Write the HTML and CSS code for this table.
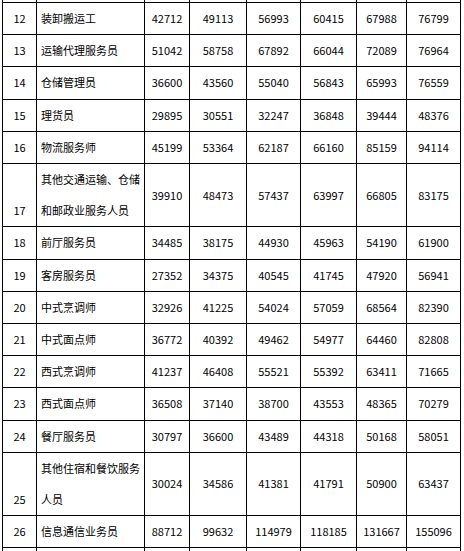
FILE: index.html
```html
<!DOCTYPE html>
<html lang="zh-CN">
<head>
<meta charset="utf-8">
<title>职业工资价位表</title>
<link rel="stylesheet" href="styles.css">
</head>
<body>
<div class="sheet">
  <div class="row stub"><div class="cell"></div><div class="cell"></div><div class="cell"></div><div class="cell"></div><div class="cell"></div><div class="cell"></div><div class="cell"></div><div class="cell"></div></div>
  <div class="row"><div class="cell no">12</div><div class="cell name">装卸搬运工</div><div class="cell num">42712</div><div class="cell num">49113</div><div class="cell num">56993</div><div class="cell num">60415</div><div class="cell num">67988</div><div class="cell num">76799</div></div>
  <div class="row"><div class="cell no">13</div><div class="cell name">运输代理服务员</div><div class="cell num">51042</div><div class="cell num">58758</div><div class="cell num">67892</div><div class="cell num">66044</div><div class="cell num">72089</div><div class="cell num">76964</div></div>
  <div class="row"><div class="cell no">14</div><div class="cell name">仓储管理员</div><div class="cell num">36600</div><div class="cell num">43560</div><div class="cell num">55040</div><div class="cell num">56843</div><div class="cell num">65993</div><div class="cell num">76559</div></div>
  <div class="row"><div class="cell no">15</div><div class="cell name">理货员</div><div class="cell num">29895</div><div class="cell num">30551</div><div class="cell num">32247</div><div class="cell num">36848</div><div class="cell num">39444</div><div class="cell num">48376</div></div>
  <div class="row"><div class="cell no">16</div><div class="cell name">物流服务师</div><div class="cell num">45199</div><div class="cell num">53364</div><div class="cell num">62187</div><div class="cell num">66160</div><div class="cell num">85159</div><div class="cell num">94114</div></div>
  <div class="row tall"><div class="cell no low">17</div><div class="cell name">其他交通运输、仓储<br>和邮政业服务人员</div><div class="cell num">39910</div><div class="cell num">48473</div><div class="cell num">57437</div><div class="cell num">63997</div><div class="cell num">66805</div><div class="cell num">83175</div></div>
  <div class="row"><div class="cell no">18</div><div class="cell name">前厅服务员</div><div class="cell num">34485</div><div class="cell num">38175</div><div class="cell num">44930</div><div class="cell num">45963</div><div class="cell num">54190</div><div class="cell num">61900</div></div>
  <div class="row"><div class="cell no">19</div><div class="cell name">客房服务员</div><div class="cell num">27352</div><div class="cell num">34375</div><div class="cell num">40545</div><div class="cell num">41745</div><div class="cell num">47920</div><div class="cell num">56941</div></div>
  <div class="row"><div class="cell no">20</div><div class="cell name">中式烹调师</div><div class="cell num">32926</div><div class="cell num">41225</div><div class="cell num">54024</div><div class="cell num">57059</div><div class="cell num">68564</div><div class="cell num">82390</div></div>
  <div class="row"><div class="cell no">21</div><div class="cell name">中式面点师</div><div class="cell num">36772</div><div class="cell num">40392</div><div class="cell num">49462</div><div class="cell num">54977</div><div class="cell num">64460</div><div class="cell num">82808</div></div>
  <div class="row"><div class="cell no">22</div><div class="cell name">西式烹调师</div><div class="cell num">41237</div><div class="cell num">46408</div><div class="cell num">55521</div><div class="cell num">55392</div><div class="cell num">63411</div><div class="cell num">71665</div></div>
  <div class="row"><div class="cell no">23</div><div class="cell name">西式面点师</div><div class="cell num">36508</div><div class="cell num">37140</div><div class="cell num">38700</div><div class="cell num">43553</div><div class="cell num">48365</div><div class="cell num">70279</div></div>
  <div class="row"><div class="cell no">24</div><div class="cell name">餐厅服务员</div><div class="cell num">30797</div><div class="cell num">36600</div><div class="cell num">43489</div><div class="cell num">44318</div><div class="cell num">50168</div><div class="cell num">58051</div></div>
  <div class="row tall"><div class="cell no low">25</div><div class="cell name">其他住宿和餐饮服务<br>人员</div><div class="cell num">30024</div><div class="cell num">34586</div><div class="cell num">41381</div><div class="cell num">41791</div><div class="cell num">50900</div><div class="cell num">63437</div></div>
  <div class="row"><div class="cell no">26</div><div class="cell name">信息通信业务员</div><div class="cell num">88712</div><div class="cell num">99632</div><div class="cell num">114979</div><div class="cell num">118185</div><div class="cell num">131667</div><div class="cell num">155096</div></div>
  <div class="row stub"><div class="cell"></div><div class="cell"></div><div class="cell"></div><div class="cell"></div><div class="cell"></div><div class="cell"></div><div class="cell"></div><div class="cell"></div></div>
</div>
</body>
</html>
```
FILE: styles.css
```css
html, body {
  margin: 0;
  padding: 0;
  background: #ffffff;
}

body {
  overflow: hidden;
  font-family: "Noto Sans CJK SC", "Noto Sans", sans-serif;
  font-size: 11px;
  color: #000000;
}

.sheet {
  margin-top: -29.2px;
  margin-left: 2px;
  width: 458px;
  border-left: 1px solid #000000;
}

.row {
  display: grid;
  grid-template-columns: 34px 108px 45px 57px 54px 56px 50px 54px;
}

.cell {
  border-right: 1px solid #000000;
  border-bottom: 1px solid #000000;
  line-height: 31.2px;
  min-height: 31.2px;
  display: flex;
  align-items: center;
  justify-content: center;
  white-space: nowrap;
}

.cell.name {
  justify-content: flex-start;
  padding-left: 4px;
  white-space: normal;
}

.cell.low {
  align-items: flex-end;
}

.stub .cell {
  height: 31.2px;
}
```
